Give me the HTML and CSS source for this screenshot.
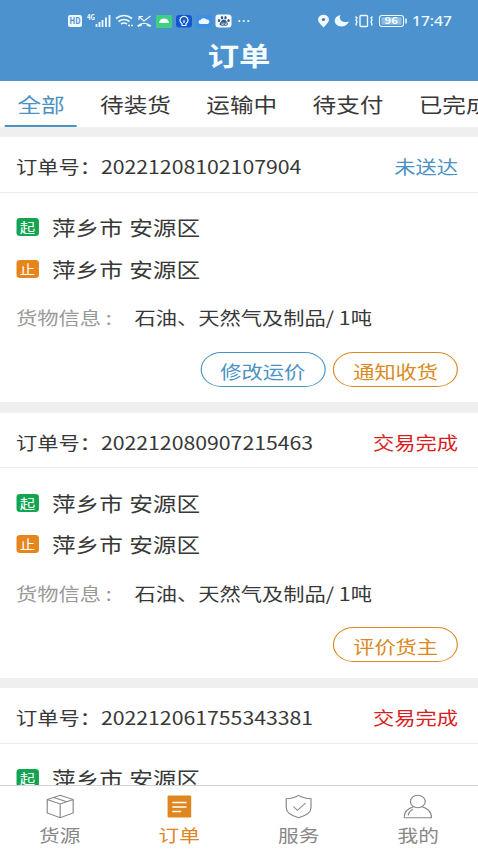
FILE: index.html
```html
<!DOCTYPE html>
<html lang="zh-CN">
<head>
<meta charset="utf-8">
<title>订单</title>
<link rel="stylesheet" href="styles.css">
</head>
<body>
<div class="app">
  <header class="header">
    <svg class="status" viewBox="0 0 478 40" preserveAspectRatio="none">
      <rect x="68" y="15" width="14" height="12" rx="2" fill="#eefaff"/>
      <text x="69.5" y="24.500" font-size="9" font-weight="700" fill="#4b92cf" textLength="11" lengthAdjust="spacingAndGlyphs">HD</text>
      <text x="87" y="20" font-size="7" font-weight="700" fill="#eefaff" textLength="8" lengthAdjust="spacingAndGlyphs">4G</text>
      <path d="M96.500 24v3M99.500 22v5M102.500 20v7M106 17.500v9.500M109.500 15v12" stroke="#eefaff" stroke-width="1.800"/>
      <g fill="none" stroke="#eefaff" stroke-width="1.700">
        <path d="M116 18.500q8-6 16 0M118.500 21.500q5.500-4 11 0M121 24q3-2 6 0"/>
        <path d="M128 25.500h5" stroke-dasharray="2 1"/>
        <path d="M139.500 17l4.500 4 6.500-5M139 20v-3.500h4" stroke-width="1.100"/>
      </g>
      <path d="M137 25.500q7-5.500 14.500 0l-1.500 1.500-3.500-1.500v-1.500h-4.500v1.500l-3.500 1.500z" fill="#eefaff"/>
      <rect x="156" y="15" width="16" height="13" rx="1" fill="#3fcf82"/>
      <path d="M159 23a5 4.500 0 0 1 10 0z" fill="#f4fff8"/>
      <rect x="176" y="15" width="16" height="12.500" rx="3" fill="#1456cf"/>
      <path d="M182 23.500a4 3.800 0 1 1 4 0v2h-4zM184 20v3" fill="none" stroke="#eefaff" stroke-width="1.200"/>
      <rect x="196" y="15" width="16" height="12.500" rx="3" fill="#3c8ee4"/>
      <path d="M200.500 24a2 2 0 0 1 0-4 3.500 3.200 0 0 1 6-.5 2.400 2.300 0 0 1 1 4.500z" fill="#f0f9ff"/>
      <rect x="215.500" y="14.500" width="16" height="13" rx="3" fill="#f4fbff"/>
      <g fill="#355a86">
        <ellipse cx="219" cy="20.500" rx="1.200" ry="1.600"/><ellipse cx="222" cy="17.700" rx="1.200" ry="1.600"/>
        <ellipse cx="225.500" cy="17.700" rx="1.200" ry="1.600"/><ellipse cx="228.500" cy="20.500" rx="1.200" ry="1.600"/>
        <path d="M219.500 24q2-4.500 4.300-4.500T228 24q-.5 2.500-4.200 1.500-3.800 1-4.300-1.500z"/>
      </g>
      <path d="M221.800 22.500v2h1.500v-2M225 22.500v2h1.500v-2" fill="none" stroke="#fff" stroke-width=".6"/>
      <g fill="#eefaff"><circle cx="239.300" cy="21" r="1.100"/><circle cx="243.800" cy="21" r="1.100"/><circle cx="248.300" cy="21" r="1.100"/></g>
      <path d="M323.500 27.500c-3-3.200-5.500-5.200-5.500-8a5.500 4.700 0 0 1 11 0c0 2.800-2.500 4.800-5.500 8z" fill="#eefaff"/>
      <circle cx="323.500" cy="19.500" r="1.600" fill="#4b75a5"/>
      <path d="M340.500 15c-2.500 5 2.500 8.500 8.500 6.500-1.500 4-6.500 6-10.500 4.500-6-2.500-4.500-10 2-11z" fill="#eefaff"/>
      <g fill="none" stroke="#eefaff" stroke-width="1.400">
        <rect x="360" y="15.500" width="7.500" height="11" rx="1"/>
        <path d="M355.500 16.500l1.500 1.500-1 2 1 2-1 2 .5 1.500M372.500 16.500l-1.500 1.500 1 2-1 2 1 2-.5 1.500"/>
        <rect x="379.500" y="15.500" width="24" height="11" rx="2.500" stroke-width="1.100"/>
        <path d="M406 18.500v5" stroke-width="1.500"/>
      </g>
      <rect x="381.500" y="17.300" width="20" height="7.500" rx="1" fill="#91bde2"/>
      <text x="384.500" y="24.500" font-size="9.500" font-weight="700" fill="#f4fcff" textLength="13.500" lengthAdjust="spacingAndGlyphs">96</text>
      <text class="clock" x="412" y="26" font-size="13.500" fill="#eefaff" textLength="40" lengthAdjust="spacingAndGlyphs">17:47</text>
    </svg>
    <h1 class="title">订单</h1>
  </header>

  <nav class="tabs">
    <a class="tab active">全部</a>
    <a class="tab">待装货</a>
    <a class="tab">运输中</a>
    <a class="tab">待支付</a>
    <a class="tab">已完成</a>
  </nav>

  <main class="orders">
    <section class="card">
      <div class="card-head"><span>订单号：20221208102107904</span><span class="state pending">未送达</span></div>
      <div class="card-body">
        <div class="place"><i class="badge from">起</i>萍乡市 安源区</div>
        <div class="place"><i class="badge to">止</i>萍乡市 安源区</div>
        <div class="goods"><span class="label">货物信息 :</span>石油、天然气及制品/ 1吨</div>
        <div class="actions"><button class="btn blue">修改运价</button><button class="btn orange">通知收货</button></div>
      </div>
    </section>
    <section class="card">
      <div class="card-head"><span>订单号：202212080907215463</span><span class="state done">交易完成</span></div>
      <div class="card-body">
        <div class="place"><i class="badge from">起</i>萍乡市 安源区</div>
        <div class="place"><i class="badge to">止</i>萍乡市 安源区</div>
        <div class="goods"><span class="label">货物信息 :</span>石油、天然气及制品/ 1吨</div>
        <div class="actions"><button class="btn orange">评价货主</button></div>
      </div>
    </section>
    <section class="card">
      <div class="card-head"><span>订单号：202212061755343381</span><span class="state done">交易完成</span></div>
      <div class="card-body">
        <div class="place"><i class="badge from">起</i>萍乡市 安源区</div>
      </div>
    </section>
  </main>

  <footer class="tabbar">
    <a class="item">
      <svg viewBox="0 0 24 24"><path d="M12 .8L23 5v13.500l-11 4.700L1 18.500V5zM1 5l11 4.500L23 5M12 9.500v13.700M6.500 3l11 4.300"/></svg>
      <span>货源</span>
    </a>
    <a class="item on">
      <svg viewBox="0 0 24 24"><rect class="solid" x="2" y="1" width="20" height="22" rx="1"/><path class="lines" d="M6 8h12M6 12.500h12M6 17h7.500"/></svg>
      <span>订单</span>
    </a>
    <a class="item">
      <svg viewBox="0 0 24 24"><path d="M12 .8C9 3 6 4 1.500 4.300V13c0 5 5 8.500 10.500 10.200C17.500 21.500 22.500 18 22.500 13V4.300C18 4 15 3 12 .8zM7.500 12l3.500 3.800 7-7.300"/></svg>
      <span>服务</span>
    </a>
    <a class="item">
      <svg viewBox="0 0 24 24"><ellipse cx="12" cy="7" rx="6.300" ry="6.200"/><path d="M8.300 12.300C3.500 14 .5 18 .3 23.200h23.400c-.2-5.200-3.200-9.200-8-10.900M3.800 21c.4-3 1.700-5 4.200-6.300"/></svg>
      <span>我的</span>
    </a>
  </footer>
</div>
</body>
</html>
```
FILE: styles.css
```css
* { box-sizing: border-box; }

html, body {
  margin: 0;
  width: 478px;
  height: 850px;
  overflow: hidden;
}

/* Narrow layout widened to fill the viewport */
.app {
  display: flex;
  flex-direction: column;
  width: 405px;
  height: 850px;
  overflow: hidden;
  transform: scaleX(1.18025);
  transform-origin: 0 0;
  background: #fff;
  color: #383838;
  font-family: "Noto Sans CJK SC", sans-serif;
  font-weight: 400;
}

.header {
  flex: none;
  height: 81px;
  background: #4b92cf;
  color: #f4fcff;
}

.status {
  display: block;
  width: 100%;
  height: 40px;
}

.clock { font-family: "Noto Sans", sans-serif; font-weight: 500; }

.title {
  margin: 0;
  font-size: 26.500px;
  line-height: 30px;
  font-weight: 700;
  text-align: center;
}

.tabs {
  flex: none;
  display: flex;
  height: 45.5px;
  padding-left: 4.300px;
  overflow: hidden;
  white-space: nowrap;
}

.tab {
  flex: none;
  padding: 0 15px;
  font-size: 20px;
  line-height: 47px;
}

.tab.active {
  padding: 0 10.500px;
  margin-right: 4.500px;
  color: #4b92c3;
  border-bottom: 2px solid #4b92c3;
}

.orders {
  flex: 1;
  min-height: 0;
  overflow: hidden;
  background: #efefef;
  padding-top: 10.500px;
}

.card {
  height: 265px;
  margin-bottom: 10.500px;
  background: #fff;
}

.card-head {
  display: flex;
  justify-content: space-between;
  height: 55.5px;
  padding: 0 17px 0 13.500px;
  border-bottom: 1px solid #ececec;
  font-size: 18px;
  line-height: 59px;
}

.pending { color: #4b92c3; }
.done { color: #d81e1e; }

.card-body { padding: 14.500px 16.800px 0 13.500px; }

.place {
  display: flex;
  align-items: center;
  height: 41.5px;
  font-size: 20px;
  word-spacing: 1px;
}

.badge {
  width: 19.500px;
  height: 18px;
  margin: 0 11px 1px 0;
  border-radius: 3px;
  color: #fff;
  font-size: 13px;
  line-height: 18px;
  font-style: normal;
  text-align: center;
}

.from { background: #13a452; }
.to { background: #e5851c; }

.goods {
  display: flex;
  height: 36px;
  margin-top: 9px;
  font-size: 18px;
  line-height: 36px;
  white-space: nowrap;
}

.label {
  width: 100.500px;
  color: #999;
}

.actions {
  display: flex;
  justify-content: flex-end;
  gap: 6.500px;
  margin-top: 16.500px;
}

.btn {
  width: 106px;
  height: 35px;
  padding: 3px 0 0;
  border: 1px solid;
  border-radius: 18px;
  background: #fff;
  font: 400 18px/30px "Noto Sans CJK SC", sans-serif;
}

.blue { color: #4b92c3; }
.orange { color: #d98a22; }

.tabbar {
  flex: none;
  display: flex;
  height: 65px;
  padding-top: 8px;
  border-top: 1px solid #d2d2d2;
  background: #fff;
}

.item {
  flex: 1;
  display: flex;
  flex-direction: column;
  align-items: center;
  color: #888;
  font-size: 17.500px;
  line-height: 32px;
}

.item svg {
  flex: none;
  width: 24px;
  height: 25px;
  fill: none;
  stroke: currentColor;
  stroke-width: 1;
}

.item.on { color: #e0861f; }
.item .solid { fill: #e0861f; stroke: none; }
.item .lines { stroke: #fff; stroke-width: 1.400; }
```
